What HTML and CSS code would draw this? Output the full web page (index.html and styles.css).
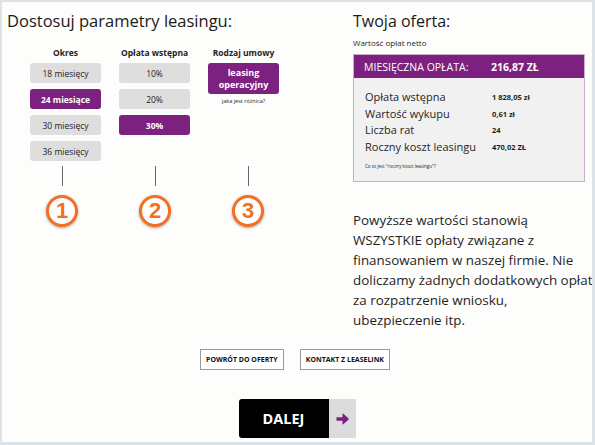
FILE: index.html
```html
<!DOCTYPE html>
<html lang="pl">
<head>
<meta charset="utf-8">
<title>Leasing</title>
<link rel="stylesheet" href="styles.css">
</head>
<body>
<div class="page">
  <div class="top">
    <section class="params">
      <h1 class="title">Dostosuj parametry leasingu:</h1>
      <div class="cols">
        <div class="col">
          <div class="col-head">Okres</div>
          <div class="opt">18 miesięcy</div>
          <div class="opt active">24 miesiące</div>
          <div class="opt">30 miesięcy</div>
          <div class="opt">36 miesięcy</div>
        </div>
        <div class="col">
          <div class="col-head">Opłata wstępna</div>
          <div class="opt">10%</div>
          <div class="opt">20%</div>
          <div class="opt active">30%</div>
        </div>
        <div class="col">
          <div class="col-head">Rodzaj umowy</div>
          <div class="opt active tall">leasing<br>operacyjny</div>
          <div class="diff">jaka jest różnica?</div>
        </div>
      </div>
      <div class="steps">
        <div class="step"><span class="stem"></span><span class="num">1</span></div>
        <div class="step"><span class="stem"></span><span class="num">2</span></div>
        <div class="step"><span class="stem"></span><span class="num">3</span></div>
      </div>
    </section>
    <section class="offer">
      <h2 class="title">Twoja oferta:</h2>
      <div class="sub">Wartość opłat netto</div>
      <div class="card">
        <div class="card-head"><span>MIESIĘCZNA OPŁATA:</span><b>216,87 ZŁ</b></div>
        <div class="card-body">
          <div class="rows">
            <span class="lbl">Opłata wstępna</span><b class="val">1 828,05 zł</b>
            <span class="lbl">Wartość wykupu</span><b class="val">0,61 zł</b>
            <span class="lbl">Liczba rat</span><b class="val">24</b>
            <span class="lbl">Roczny koszt leasingu</span><b class="val">470,02 ZŁ</b>
          </div>
          <div class="hint">Co to jest "roczny koszt leasingu"?</div>
        </div>
      </div>
      <p class="note">Powyższe wartości stanowią<br>WSZYSTKIE opłaty związane z<br>finansowaniem w naszej firmie. Nie<br>doliczamy żadnych dodatkowych opłat<br>za rozpatrzenie wniosku,<br>ubezpieczenie itp.</p>
    </section>
  </div>
  <div class="links">
    <a class="link-btn">POWRÓT DO OFERTY</a>
    <a class="link-btn">KONTAKT Z LEASELINK</a>
  </div>
  <div class="next">
    <span class="next-label">DALEJ</span>
    <span class="next-arrow"><svg width="13" height="12" viewBox="0 0 13 12"><path d="M0.5 4.3 H6.5 V1 Q6.5 0.2 7.3 0.8 L12.4 5.3 Q13 6 12.4 6.7 L7.3 11.2 Q6.5 11.8 6.5 11 V7.7 H0.5 Z" fill="#7c217f"/></svg></span>
  </div>
</div>
</body>
</html>
```
FILE: styles.css
```css
html, body { margin: 0; padding: 0; }
body { font-family: "Open Sans", "Liberation Sans", sans-serif; color: #1f1f1f; }
.page {
  width: 595px; height: 445px; box-sizing: border-box;
  border-style: solid; border-color: #dde2e8; border-width: 2px 3px 3px 2px;
  background: #fdfdfb; overflow: hidden;
}
.top { display: flex; }
.params { width: 351px; }
.title { margin: 5px 0 0 5px; font-size: 16.5px; font-weight: 400; line-height: 28px; color: #1a1a1a; }
.offer .title { margin-left: 0; font-size: 16px; }
.cols {
  display: grid; grid-template-columns: repeat(3, 71px); column-gap: 18px;
  margin: 11px 0 0 28px; align-items: start;
}
.col { display: flex; flex-direction: column; gap: 6px; }
.col-head {
  font-size: 8.5px; font-weight: 700; line-height: 14px; text-align: center;
  margin: 0 -10px -3px; white-space: nowrap;
}
.opt {
  height: 20px; display: flex; align-items: center; justify-content: center;
  background: #dedede; border-radius: 3px; font-size: 8.5px; color: #222;
}
.opt.active { background: #7c217f; color: #fff; font-weight: 700; }
.opt.tall { height: 31px; line-height: 11.5px; text-align: center; font-size: 9px; }
.diff { font-size: 5.5px; text-align: center; margin-top: -2px; line-height: 7px; }
.steps {
  display: grid; grid-template-columns: repeat(3, 32px); column-gap: 61px;
  margin: 5px 0 0 44px;
}
.step { display: flex; flex-direction: column; align-items: center; }
.stem { width: 1px; height: 20px; background: #666; }
.num {
  margin-top: 9px; width: 32px; height: 32px; box-sizing: border-box;
  border: 3px solid #f36f21; border-radius: 50%; background: #fff;
  box-shadow: 0 1px 3px rgba(0,0,0,0.35);
  display: flex; align-items: center; justify-content: center;
  font-family: "Liberation Sans", Arial, sans-serif; font-weight: 700; font-size: 22px; color: #f36f21;
}
.offer { width: 232px; }
.sub { font-size: 8px; line-height: 12px; margin-top: 2px; }
.card { margin-top: 5px; border: 1px solid #c9aecb; }
.card-head {
  height: 23px; background: #7c217f; color: #fff; display: grid;
  grid-template-columns: 127px 1fr; align-items: center; padding-left: 10px;
  font-size: 10.5px;
}
.card-head b { font-size: 10.5px; }
.card-body { background: #f1f1f1; padding: 11px 11px 12px; }
.rows { display: grid; grid-template-columns: 127px 1fr; line-height: 16.5px; align-items: center; }
.lbl { font-size: 11px; }
.val { font-size: 7.5px; }
.hint { font-size: 4.5px; line-height: 6px; margin-top: 8px; }
.note { margin: 28px 0 0; font-size: 13.4px; line-height: 20px; white-space: nowrap; }
.links { display: flex; justify-content: center; gap: 16px; margin-top: 19px; padding-right: 4px; }
.link-btn {
  height: 21px; box-sizing: border-box; border: 1px solid #9a9a9a; padding: 0 5px;
  display: flex; align-items: center; font-size: 7px; font-weight: 700; color: #111; background: #fff;
}
.next { display: flex; justify-content: center; margin-top: 29px; }
.next-label {
  width: 90px; height: 39px; background: #000; color: #fff; border-radius: 3px 0 0 3px;
  display: flex; align-items: center; justify-content: center; font-size: 14.5px; font-weight: 700;
}
.next-arrow { width: 27px; height: 39px; background: #dcdcdc; display: flex; align-items: center; justify-content: center; }
.next-arrow svg { display: block; }
```
